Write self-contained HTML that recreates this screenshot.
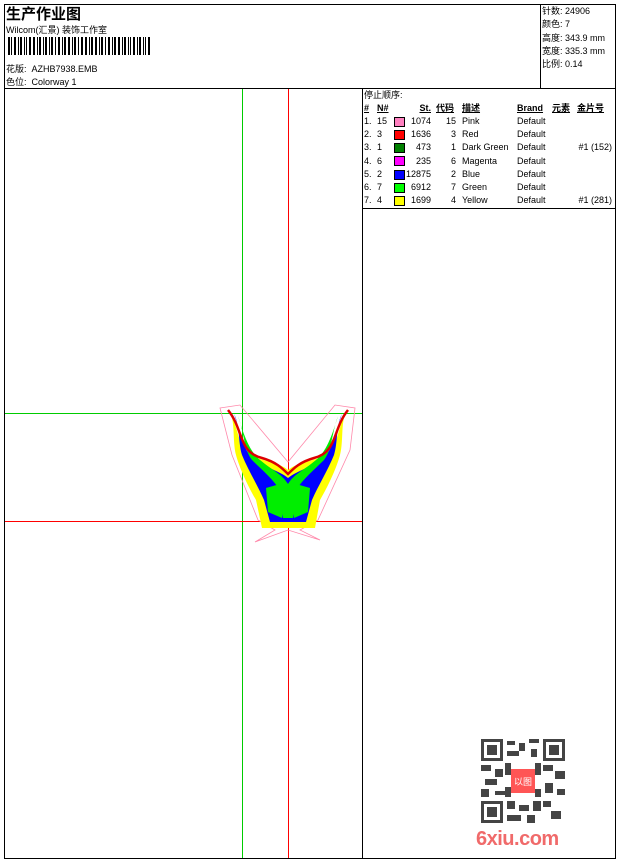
<!DOCTYPE html>
<html><head><meta charset="utf-8"><style>
body{margin:0;width:620px;height:860px;background:#fff;position:relative;font-family:"Liberation Sans","Noto Sans CJK SC",sans-serif;font-size:9px;color:#000;overflow:hidden}
.a{position:absolute;white-space:nowrap}
.l{position:absolute;background:#000}
.r{position:absolute;white-space:nowrap;text-align:right}
.u{text-decoration:underline;font-weight:bold}
.sw{position:absolute;width:9px;height:8px;border:1px solid #000}
</style></head><body>
<div class="l" style="left:4px;top:4px;width:612px;height:1px"></div>
<div class="l" style="left:4px;top:858px;width:612px;height:1px"></div>
<div class="l" style="left:4px;top:4px;width:1px;height:855px"></div>
<div class="l" style="left:615px;top:4px;width:1px;height:855px"></div>
<div class="l" style="left:4px;top:88px;width:612px;height:1px"></div>
<div class="l" style="left:540px;top:4px;width:1px;height:84px"></div>
<div class="l" style="left:362px;top:88px;width:1px;height:770px"></div>
<div class="l" style="left:362px;top:208px;width:254px;height:1px"></div>
<div class="a" style="left:6px;top:3px;font-size:15px;font-weight:bold">生产作业图</div>
<div class="a" style="left:6px;top:23px;font-size:9px">Wilcom(汇景) 装饰工作室</div>
<svg class="a" style="left:8px;top:37px" width="144" height="18">
<g fill="#000">
<rect x="0" width="2" height="18"/><rect x="3" width="1" height="18"/><rect x="6" width="2" height="18"/><rect x="10" width="1" height="18"/><rect x="12" width="2" height="18"/><rect x="16" width="1" height="18"/><rect x="18" width="1" height="18"/><rect x="21" width="2" height="18"/><rect x="25" width="2" height="18"/><rect x="29" width="1" height="18"/><rect x="31" width="2" height="18"/><rect x="35" width="1" height="18"/><rect x="37" width="2" height="18"/><rect x="41" width="1" height="18"/><rect x="43" width="2" height="18"/><rect x="47" width="1" height="18"/><rect x="50" width="2" height="18"/><rect x="54" width="1" height="18"/><rect x="56" width="2" height="18"/><rect x="60" width="2" height="18"/><rect x="64" width="1" height="18"/><rect x="66" width="2" height="18"/><rect x="70" width="1" height="18"/><rect x="73" width="2" height="18"/><rect x="77" width="2" height="18"/><rect x="81" width="1" height="18"/><rect x="83" width="2" height="18"/><rect x="87" width="2" height="18"/><rect x="91" width="1" height="18"/><rect x="93" width="2" height="18"/><rect x="97" width="1" height="18"/><rect x="100" width="2" height="18"/><rect x="104" width="1" height="18"/><rect x="106" width="2" height="18"/><rect x="110" width="2" height="18"/><rect x="114" width="1" height="18"/><rect x="116" width="2" height="18"/><rect x="120" width="1" height="18"/><rect x="122" width="1" height="18"/><rect x="125" width="2" height="18"/><rect x="129" width="1" height="18"/><rect x="131" width="2" height="18"/><rect x="135" width="1" height="18"/><rect x="137" width="1" height="18"/><rect x="140" width="2" height="18"/>
</g></svg>
<div class="a" style="left:6px;top:62px">花版:&nbsp; AZHB7938.EMB</div>
<div class="a" style="left:6px;top:75px">色位:&nbsp; Colorway 1</div>
<div class="a" style="left:542px;top:5px;line-height:13.3px">针数: 24906<br>颜色: 7<br>高度: 343.9 mm<br>宽度: 335.3 mm<br>比例: 0.14</div>
<div class="a" style="left:364px;top:88px">停止顺序:</div>
<div style="position:absolute;left:0;top:102px;line-height:13.2px">
<div class="a u" style="left:364px">#</div><div class="a u" style="left:377px">N#</div><div class="r u" style="left:400px;width:31px">St.</div><div class="a u" style="left:436px">代码</div><div class="a u" style="left:462px">描述</div><div class="a u" style="left:517px">Brand</div><div class="a u" style="left:552px">元素</div><div class="a u" style="left:577px">金片号</div>
</div>
<div id="rows"></div>
<div style="position:absolute;left:0;top:115px">
<div class="a" style="left:364px;top:0;line-height:13.2px">1.<br>2.<br>3.<br>4.<br>5.<br>6.<br>7.</div>
<div class="a" style="left:377px;top:0;line-height:13.2px">15<br>3<br>1<br>6<br>2<br>7<br>4</div>
<div class="sw" style="left:394px;top:2px;background:#ff80c0"></div>
<div class="sw" style="left:394px;top:15px;background:#f00"></div>
<div class="sw" style="left:394px;top:28px;background:#008000"></div>
<div class="sw" style="left:394px;top:41px;background:#f0f"></div>
<div class="sw" style="left:394px;top:55px;background:#00f"></div>
<div class="sw" style="left:394px;top:68px;background:#0f0"></div>
<div class="sw" style="left:394px;top:81px;background:#ff0"></div>
<div class="r" style="left:400px;width:31px;top:0;line-height:13.2px">1074<br>1636<br>473<br>235<br>12875<br>6912<br>1699</div>
<div class="r" style="left:436px;width:20px;top:0;line-height:13.2px">15<br>3<br>1<br>6<br>2<br>7<br>4</div>
<div class="a" style="left:462px;top:0;line-height:13.2px">Pink<br>Red<br>Dark Green<br>Magenta<br>Blue<br>Green<br>Yellow</div>
<div class="a" style="left:517px;top:0;line-height:13.2px">Default<br>Default<br>Default<br>Default<br>Default<br>Default<br>Default</div>
<div class="r" style="left:560px;width:52px;top:0;line-height:13.2px">&nbsp;<br>&nbsp;<br>#1 (152)<br>&nbsp;<br>&nbsp;<br>&nbsp;<br>#1 (281)</div>
</div>
<svg class="a" style="left:0;top:0" width="362" height="860">
<line x1="242.5" y1="89" x2="242.5" y2="858" stroke="#0c0"/>
<line x1="288.5" y1="89" x2="288.5" y2="858" stroke="#f00"/>
<line x1="5" y1="413.5" x2="362" y2="413.5" stroke="#0c0"/>
<line x1="5" y1="521.5" x2="362" y2="521.5" stroke="#f00"/>
<polygon points="220,408 240,405 288,462 335,405 355,408 350,450 318,520 300,530 320,540 288,530 255,542 275,530 258,520 232,455" fill="none" stroke="#f8a" stroke-width="0.8"/>
<path d="M228,410 C236,418 232,440 236,455 C240,470 250,490 256,500 L262,528 L315,528 L320,500 C326,490 336,470 340,455 C344,440 340,418 348,410 C340,420 338,440 332,450 C320,462 300,460 288,470 C276,460 256,462 244,450 C238,440 236,420 228,410 Z" fill="#ff0"/>
<path d="M234,414 C240,425 238,442 242,455 C248,470 258,486 264,500 L270,522 L306,522 L312,500 C318,486 328,470 334,455 C338,442 336,425 342,414 C336,430 334,446 326,455 C312,468 298,470 288,478 C278,470 264,468 250,455 C242,446 240,430 234,414 Z" fill="#00f"/>
<path d="M238,416 C244,432 244,450 252,460 C262,470 272,478 280,490 L283,518 L293,518 L296,490 C304,478 314,470 324,460 C332,450 332,432 338,416 C332,436 326,452 316,460 C304,470 294,474 288,484 C282,474 272,470 260,460 C250,452 244,436 238,416 Z" fill="#0e0"/>
<path d="M266,488 L280,484 L284,505 L282,518 L268,512 Z M310,488 L296,484 L292,505 L294,518 L308,512 Z" fill="#0e0"/>
<path d="M228,410 C244,430 238,452 262,458 C276,462 282,468 288,474 C294,468 300,462 314,458 C338,452 332,430 348,410" fill="none" stroke="#d00" stroke-width="2.5"/>
</svg>
<svg class="a" style="left:481px;top:739px" width="84" height="84">
<rect width="84" height="84" fill="#fff"/>
<g fill="#444">
<rect x="0" y="0" width="22" height="22"/><rect x="62" y="0" width="22" height="22"/><rect x="0" y="62" width="22" height="22"/>
</g>
<g fill="#fff"><rect x="3" y="3" width="16" height="16"/><rect x="65" y="3" width="16" height="16"/><rect x="3" y="65" width="16" height="16"/></g>
<g fill="#444"><rect x="6" y="6" width="10" height="10"/><rect x="68" y="6" width="10" height="10"/><rect x="6" y="68" width="10" height="10"/>
<rect x="26" y="2" width="8" height="4"/><rect x="38" y="4" width="6" height="8"/><rect x="48" y="0" width="10" height="4"/><rect x="26" y="12" width="12" height="5"/><rect x="50" y="10" width="6" height="8"/>
<rect x="0" y="26" width="10" height="6"/><rect x="14" y="30" width="8" height="8"/><rect x="4" y="40" width="12" height="6"/><rect x="0" y="50" width="8" height="8"/><rect x="14" y="52" width="10" height="4"/>
<rect x="62" y="26" width="10" height="6"/><rect x="74" y="32" width="10" height="8"/><rect x="64" y="44" width="8" height="10"/><rect x="76" y="50" width="8" height="6"/>
<rect x="26" y="62" width="8" height="8"/><rect x="38" y="66" width="10" height="6"/><rect x="52" y="62" width="8" height="10"/><rect x="26" y="76" width="14" height="6"/><rect x="46" y="76" width="8" height="8"/><rect x="62" y="62" width="8" height="6"/><rect x="70" y="72" width="10" height="8"/>
<rect x="24" y="24" width="6" height="12"/><rect x="54" y="24" width="6" height="12"/><rect x="24" y="48" width="6" height="10"/><rect x="54" y="50" width="6" height="8"/></g>
<rect x="30" y="30" width="24" height="24" fill="#f55"/>
<text x="42" y="46" font-size="9" fill="#fff" text-anchor="middle" font-family="Noto Sans CJK SC">以图</text>
</svg>
<div class="a" style="left:476px;top:828px;font-size:20px;font-weight:bold;color:#f06a6a;letter-spacing:-0.5px">6xiu.com</div>
</body></html>
